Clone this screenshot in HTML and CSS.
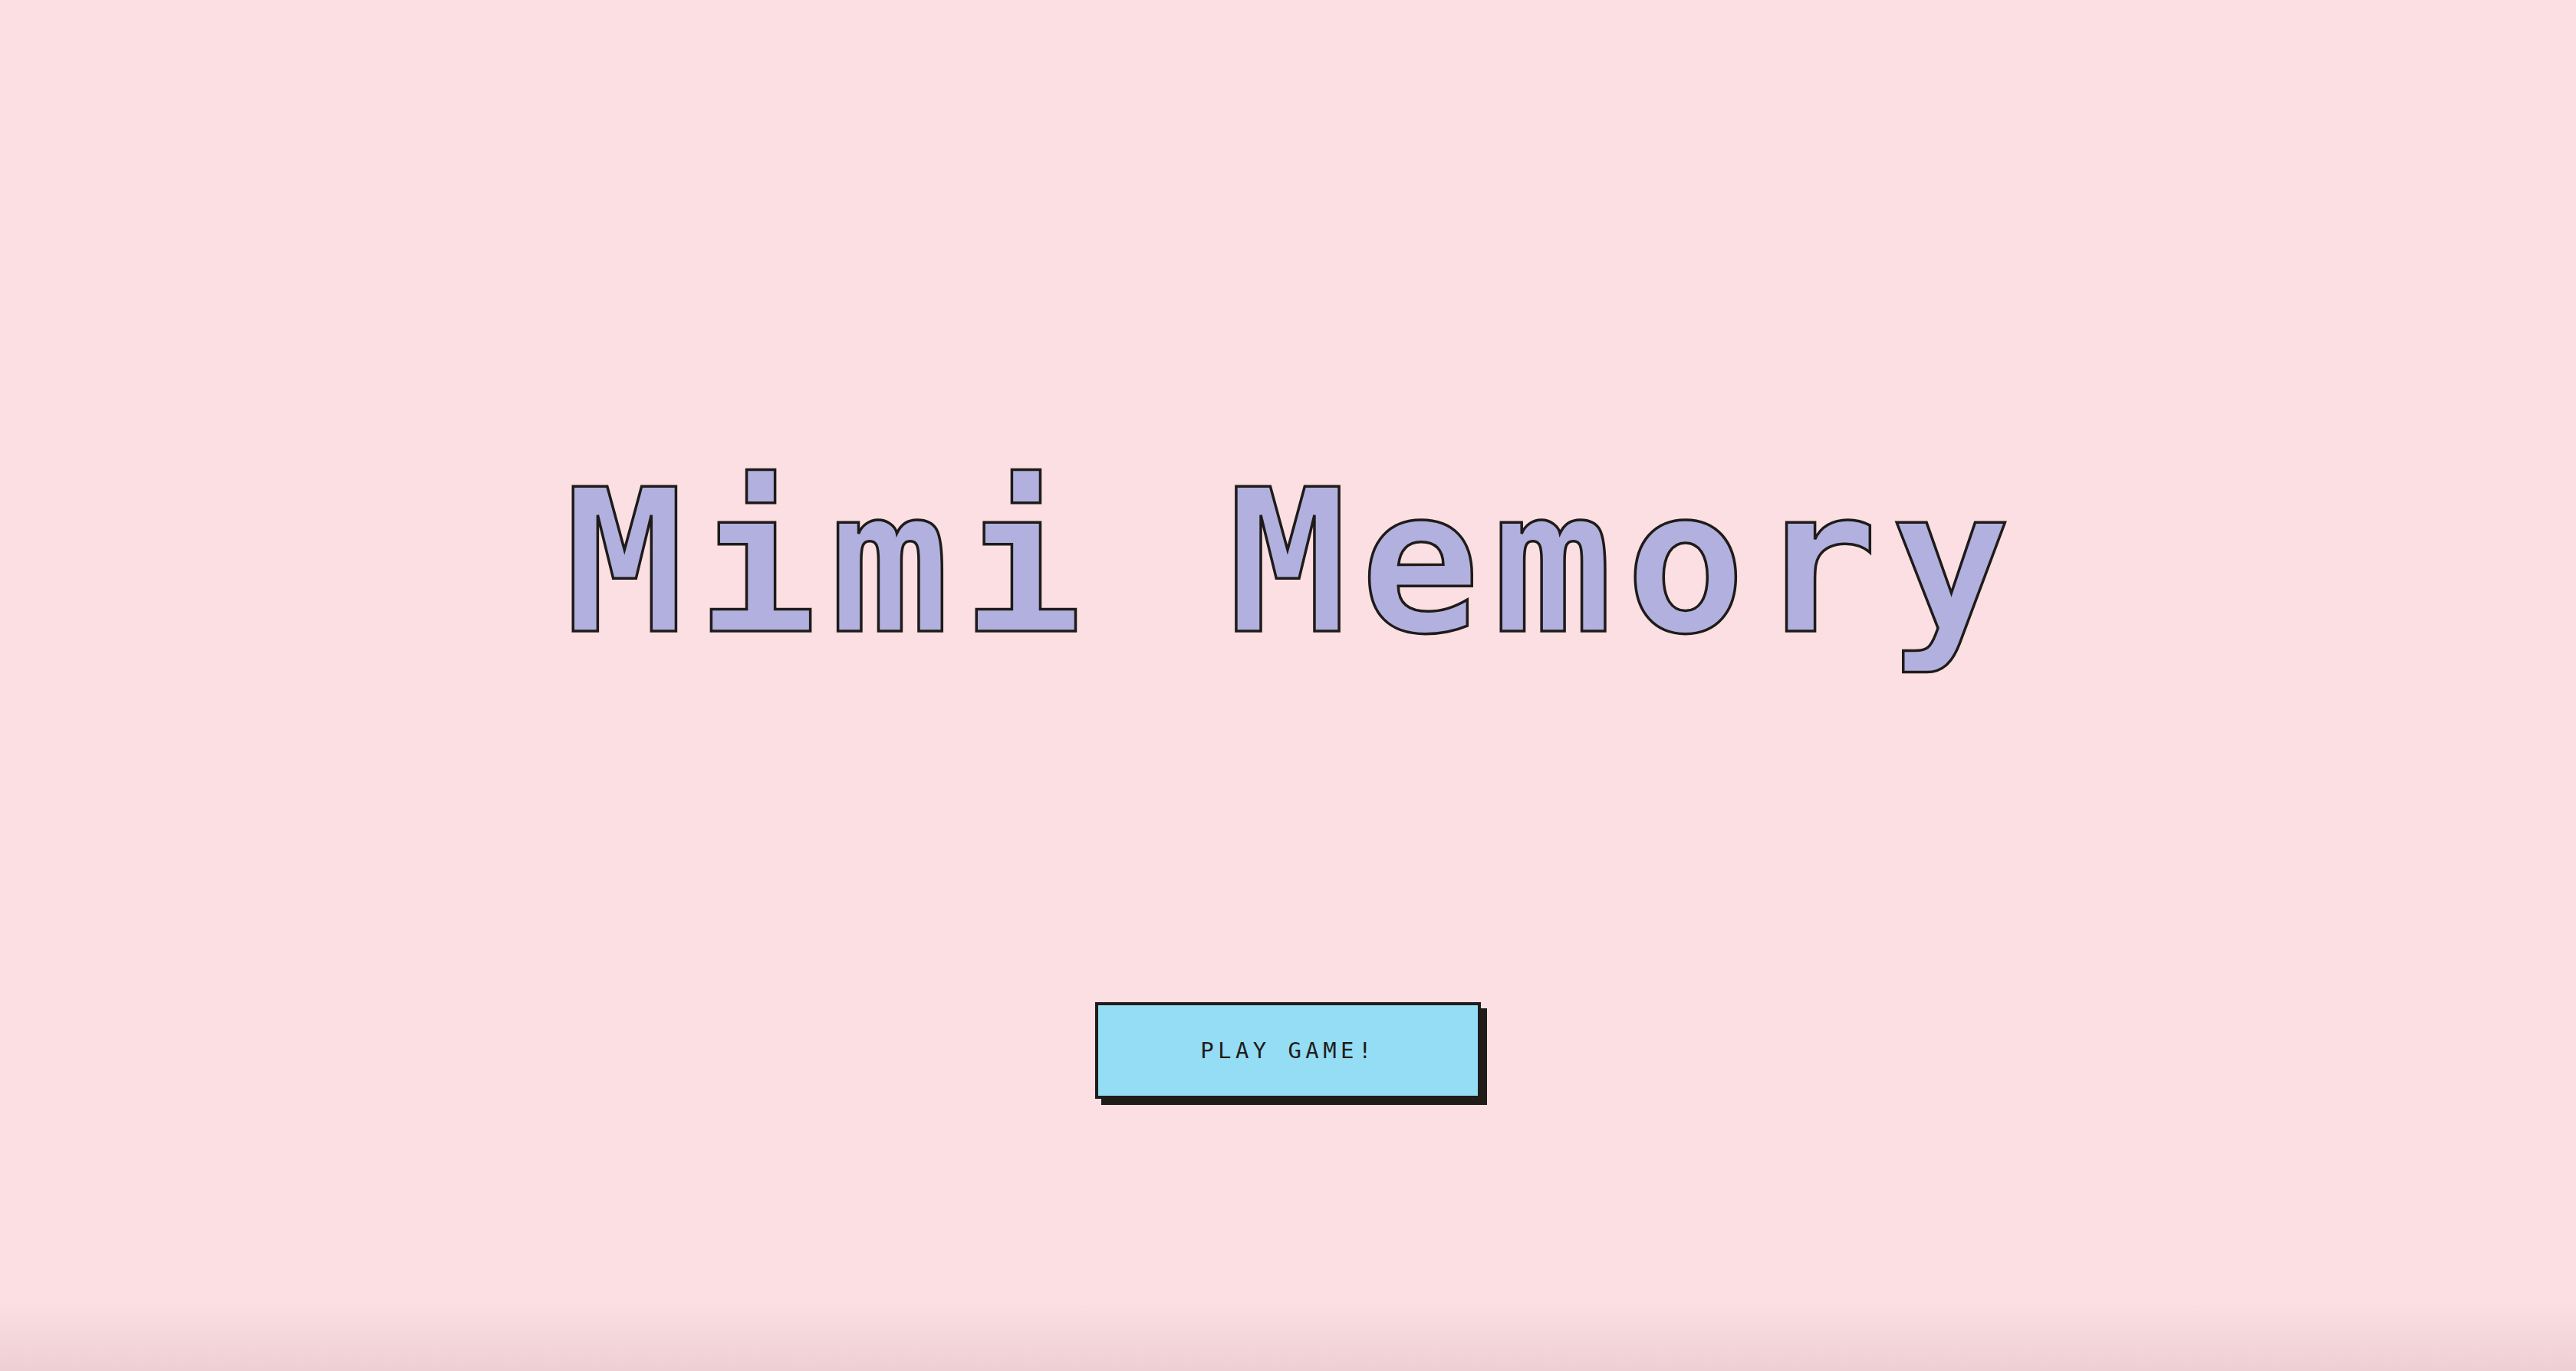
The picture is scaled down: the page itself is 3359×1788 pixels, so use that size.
FILE: index.html
```html
<!DOCTYPE html>
<html lang="en">
<head>
<meta charset="utf-8">
<title>Mimi Memory</title>
<link rel="stylesheet" href="styles.css">
</head>
<body>
<main class="start-screen">
  <h1 class="title">Mimi Memory</h1>
  <button class="play-btn" type="button">PLAY GAME!</button>
</main>
</body>
</html>
```

FILE: styles.css
```css
html, body {
  margin: 0;
  padding: 0;
  height: 100%;
}

body {
  background: #fbdfe3;
  font-family: "DejaVu Sans Mono", "Liberation Mono", monospace;
  overflow: hidden;
}

body::after {
  content: "";
  position: fixed;
  left: 0;
  right: 0;
  bottom: 0;
  height: 90px;
  background: linear-gradient(to bottom, rgba(214, 180, 186, 0) 0%, rgba(214, 180, 186, 0.35) 100%);
  pointer-events: none;
}

.start-screen {
  display: flex;
  flex-direction: column;
  align-items: center;
  padding-top: 604px;
}

.title {
  margin: 0;
  padding-left: 16px;
  font-family: "DejaVu Sans Mono", monospace;
  font-weight: 700;
  font-size: 259px;
  line-height: 259px;
  letter-spacing: 17px;
  color: #b1b0de;
  -webkit-text-stroke: 3.5px #1f1b19;
  white-space: nowrap;
}

.play-btn {
  margin-top: 444px;
  width: 503px;
  height: 126px;
  box-sizing: border-box;
  background: #95ddf4;
  border: 4px solid #201c19;
  box-shadow: 8px 8px 0 #201c19;
  border-radius: 0;
  font-family: "DejaVu Sans Mono", monospace;
  font-weight: 400;
  font-size: 29px;
  letter-spacing: 5.4px;
  color: #201c19;
  padding: 0;
  cursor: pointer;
}
```
